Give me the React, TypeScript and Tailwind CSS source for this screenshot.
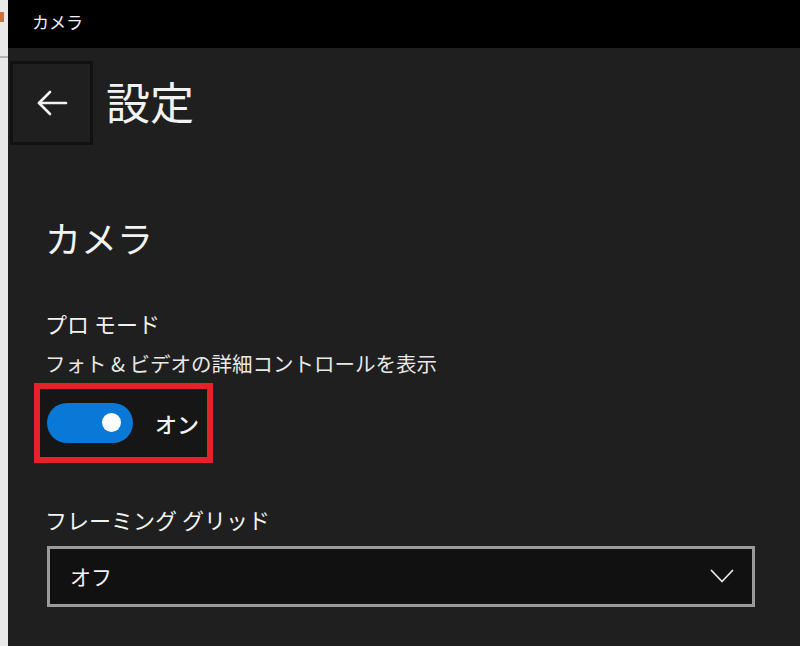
const jp = { fontFamily: '"Noto Sans CJK JP", "Noto Sans", sans-serif' }

function BackButton() {
  return (
    <div className="w-[83px] h-[84px] border-[3px] border-[#111] flex items-center justify-center">
      <svg width="34" height="30" viewBox="0 0 34 30" fill="none" stroke="#f2f2f2" strokeWidth="2.6" strokeLinecap="round" strokeLinejoin="round">
        <path d="M31 15H4" />
        <path d="M15 4L4 15l11 11" />
      </svg>
    </div>
  )
}

function Toggle() {
  return (
    <div className="w-[86px] h-[40px] rounded-full bg-[#0a78d7] flex items-center justify-end pr-[12px]">
      <div className="w-[19px] h-[19px] rounded-full bg-white" />
    </div>
  )
}

export default function App() {
  return (
    <div className="w-[800px] h-[646px] flex overflow-hidden bg-[#1f1f1f] text-[#f2f2f2]" style={jp}>
      <div className="w-[8px] shrink-0 bg-[#e9e9e9] flex flex-col">
        <div className="h-[12px]" />
        <div className="h-[10px] w-[4px] bg-[#d2703a]" />
        <div className="h-[34px]" />
        <div className="h-[2px] bg-[#b5b5b5]" />
      </div>
      <div className="flex-1 flex flex-col">
        <div className="h-[48px] bg-black flex items-center pl-[24px] pb-[6px] text-[17px] leading-none">
          カメラ
        </div>
        <div className="flex items-center gap-[13px] pt-[13px] pl-[2px]">
          <BackButton />
          <div className="text-[44px] leading-none pb-[4px]">設定</div>
        </div>
        <div className="pl-[37px] pt-[74px] text-[36px] leading-none">カメラ</div>
        <div className="pl-[37px] pt-[57px] text-[22px] leading-none">プロ モード</div>
        <div className="pl-[37px] pt-[19px] text-[20.5px] leading-none text-[#e8e8e8]">
          フォト &amp; ビデオの詳細コントロールを表示
        </div>
        <div className="pl-[26px] pt-[9px]">
          <div className="w-[179px] h-[80px] border-[6px] border-[#e8202a] bg-[#161616] flex items-center gap-[22px] pl-[7px]">
            <Toggle />
            <span className="text-[22px] leading-none font-medium">オン</span>
          </div>
        </div>
        <div className="pl-[37px] pt-[45px] text-[22px] leading-none">フレーミング グリッド</div>
        <div className="pl-[39px] pt-[16px]">
          <div className="w-[708px] h-[61px] border-[3px] border-[#9a9a9a] bg-[#111] flex items-center justify-between pl-[20px] pr-[18px]">
            <span className="text-[21px] leading-none">オフ</span>
            <svg width="24" height="14" viewBox="0 0 24 14" fill="none" stroke="#e6e6e6" strokeWidth="1.8" strokeLinecap="round" strokeLinejoin="round">
              <path d="M1.5 1.5L12 12.5 22.5 1.5" />
            </svg>
          </div>
        </div>
      </div>
    </div>
  )
}
